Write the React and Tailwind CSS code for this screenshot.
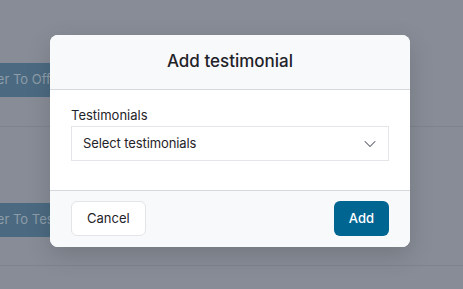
import { ChevronDown } from 'lucide-react';

export default function App() {
  return (
    <div className="relative w-[463px] h-[289px] overflow-hidden bg-[#878c96] font-['Inter',sans-serif]">
      {/* page behind the overlay */}
      <div className="flex flex-col">
        <div className="pt-[63px] pb-[29px] border-b border-[#7e838d]">
          <div className="w-[50px] h-[34px] overflow-hidden bg-[#4b6a81]">
            <button className="h-[34px] -ml-[54px] px-3 text-[#8d9ca8] text-[13px] whitespace-nowrap">
              Transfer To Offers
            </button>
          </div>
        </div>
        <div className="pt-[76px] pb-[28px] border-b border-[#7e838d]">
          <div className="w-[50px] h-[34px] overflow-hidden bg-[#4b6a81]">
            <button className="h-[34px] -ml-[54px] px-3 text-[#8d9ca8] text-[13px] whitespace-nowrap">
              Transfer To Testimonials
            </button>
          </div>
        </div>
      </div>

      {/* modal */}
      <div className="absolute left-[50px] top-[35px] w-[360px] rounded-lg overflow-hidden bg-white shadow-[0_8px_24px_rgba(0,0,0,0.15)]">
        <div className="h-[55px] flex items-center justify-center bg-[#f8f9fb] border-b border-[#d4d7dc]">
          <h2 className="text-[17px] font-medium text-[#1f2329]">Add testimonial</h2>
        </div>
        <div className="px-[21px] pt-[15px] pb-[29px]">
          <label className="block text-[13px] leading-[21px] text-[#1f2329]">Testimonials</label>
          <div className="h-[35px] flex items-center justify-between border border-[#e3e5e9] pl-[11px] pr-[8px]">
            <span className="text-[13px] tracking-[-0.1px] text-[#1f2329]">Select testimonials</span>
            <ChevronDown size={20} strokeWidth={1.25} className="text-[#555a63]" />
          </div>
        </div>
        <div className="flex items-center justify-between px-[21px] pt-[10px] pb-[11px] bg-[#f8f9fb] border-t border-[#d4d7dc]">
          <button className="h-[35px] px-[15px] rounded-md border border-[#e3e5e9] bg-white text-[13px] text-[#1f2329]">
            Cancel
          </button>
          <button className="h-[35px] px-[15px] rounded-md bg-[#006591] text-[13px] font-medium text-white">
            Add
          </button>
        </div>
      </div>
    </div>
  );
}
